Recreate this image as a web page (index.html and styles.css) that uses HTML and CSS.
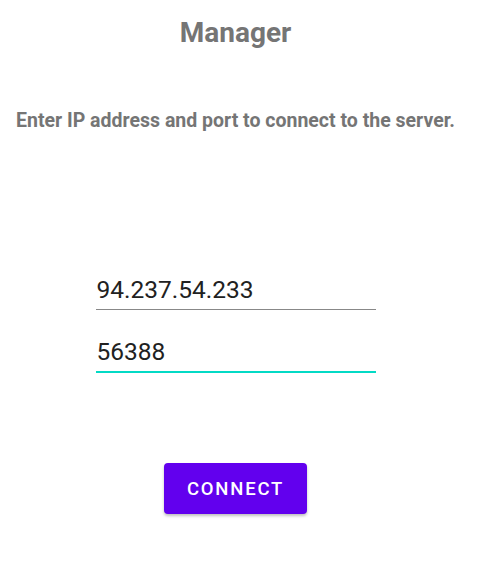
FILE: index.html
```html
<!DOCTYPE html>
<html>
<head>
<meta charset="utf-8">
<link rel="stylesheet" href="styles.css">
</head>
<body>
<div class="screen">
  <h1 class="title">Manager</h1>
  <p class="subtitle">Enter IP address and port to connect to the server.</p>
  <div class="fields">
    <div class="field"><span class="value">94.237.54.233</span></div>
    <div class="field focused"><span class="value">56388</span></div>
  </div>
  <div class="actions">
    <button class="btn">CONNECT</button>
  </div>
</div>
</body>
</html>
```
FILE: styles.css
```css
html, body {
  margin: 0;
  padding: 0;
  background: #ffffff;
}
.screen {
  width: 471px;
  height: 587px;
  display: flex;
  flex-direction: column;
  align-items: center;
  font-family: Roboto, "Liberation Sans", sans-serif;
}
.title {
  margin: 14px 0 0;
  font-size: 28px;
  font-weight: 700;
  color: #757575;
  line-height: 38px;
}
.subtitle {
  margin: 57px 0 0;
  font-size: 19.5px;
  font-weight: 700;
  color: #757575;
  line-height: 24px;
  white-space: nowrap;
}
.fields {
  margin-top: 135px;
  width: 280px;
  display: flex;
  flex-direction: column;
  gap: 21px;
}
.field {
  height: 42px;
  border-bottom: 1px solid #888888;
  display: flex;
  align-items: flex-end;
  padding-left: 1px;
  padding-bottom: 5px;
  box-sizing: border-box;
}
.field.focused {
  border-bottom: 2px solid #03dac5;
}
.value {
  font-size: 24.5px;
  color: #212121;
  line-height: 28px;
}
.actions {
  margin-top: 90px;
}
.btn {
  width: 143px;
  height: 51px;
  border: none;
  border-radius: 4px;
  background: #6200ee;
  color: #ffffff;
  font-family: Roboto, "Liberation Sans", sans-serif;
  font-size: 18.5px;
  font-weight: 500;
  letter-spacing: 1.8px;
  box-shadow: 0 2px 3px rgba(0,0,0,0.25);
  padding: 0;
}
```
